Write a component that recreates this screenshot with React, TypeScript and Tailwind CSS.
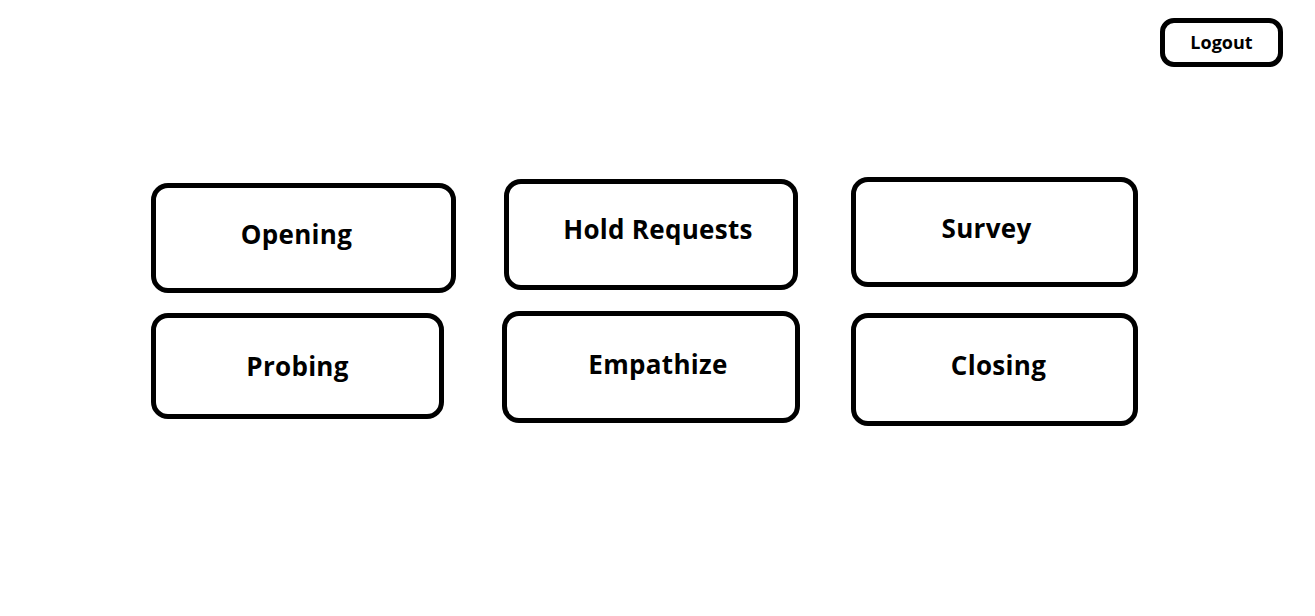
const box =
  "flex items-center justify-center border-[5px] border-black rounded-[17px] bg-white text-black text-[26px] font-bold tracking-[0.3px]";

export default function App() {
  return (
    <div
      className="w-[1315px] h-[616px] bg-white overflow-hidden"
      style={{ fontFamily: '"Open Sans", "Noto Sans", sans-serif' }}
    >
      <div className="flex justify-end pt-[18px] pr-[32px]">
        <button className="w-[123px] h-[49px] flex items-center justify-center border-[5px] border-black rounded-[14px] text-[18px] font-bold text-black">
          Logout
        </button>
      </div>

      {/* top row */}
      <div className="flex items-start mt-[110px] pl-[151px]">
        <button className={`${box} mt-[6px] w-[305px] h-[110px] pr-[14px] pb-[8px]`}>Opening</button>
        <button className={`${box} ml-[48px] mt-[2px] w-[294px] h-[111px] pl-[14px] pb-[10px]`}>Hold Requests</button>
        <button className={`${box} ml-[53px] w-[287px] h-[110px] pr-[16px] pb-[8px]`}>Survey</button>
      </div>

      {/* bottom row */}
      <div className="flex items-start mt-[18px] pl-[151px]">
        <button className={`${box} mt-[2px] w-[293px] h-[106px]`}>Probing</button>
        <button className={`${box} ml-[58px] w-[298px] h-[112px] pl-[14px] pb-[6px]`}>Empathize</button>
        <button className={`${box} ml-[51px] mt-[2px] w-[287px] h-[113px] pl-[8px] pb-[9px]`}>Closing</button>
      </div>
    </div>
  );
}
